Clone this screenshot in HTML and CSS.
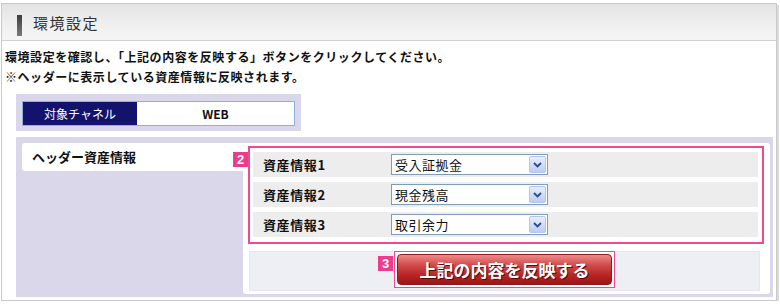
FILE: index.html
```html
<!DOCTYPE html>
<html lang="ja">
<head>
    <meta charset="UTF-8">
    <title>環境設定</title>
    <link rel="stylesheet" href="styles.css">
</head>
<body>
    <div class="frame">
        <div class="title-bar">
            <span class="title-mark"></span>
            <h1>環境設定</h1>
        </div>

        <div class="content">
            <p class="intro">
                環境設定を確認し、「上記の内容を反映する」ボタンをクリックしてください。<br>
                ※ヘッダーに表示している資産情報に反映されます。
            </p>

            <div class="channel-box">
                <div class="channel">
                    <span class="channel-label">対象チャネル</span>
                    <span class="channel-value">WEB</span>
                </div>
            </div>

            <div class="asset-panel">
                <div class="asset-tab">ヘッダー資産情報</div>

                <div class="asset-body">
                    <div class="asset-list">
                        <span class="badge badge-list">2</span>

                        <div class="asset-row">
                            <span class="asset-label">資産情報1</span>
                            <div class="select">
                                <span class="select-text">受入証拠金</span>
                                <span class="select-arrow">
                                    <svg width="9" height="6" viewBox="0 0 9 6"><path d="M1 1 L4.5 4.5 L8 1" fill="none" stroke="#2c4a8c" stroke-width="1.8"/></svg>
                                </span>
                            </div>
                        </div>

                        <div class="asset-row">
                            <span class="asset-label">資産情報2</span>
                            <div class="select">
                                <span class="select-text">現金残高</span>
                                <span class="select-arrow">
                                    <svg width="9" height="6" viewBox="0 0 9 6"><path d="M1 1 L4.5 4.5 L8 1" fill="none" stroke="#2c4a8c" stroke-width="1.8"/></svg>
                                </span>
                            </div>
                        </div>

                        <div class="asset-row">
                            <span class="asset-label">資産情報3</span>
                            <div class="select">
                                <span class="select-text">取引余力</span>
                                <span class="select-arrow">
                                    <svg width="9" height="6" viewBox="0 0 9 6"><path d="M1 1 L4.5 4.5 L8 1" fill="none" stroke="#2c4a8c" stroke-width="1.8"/></svg>
                                </span>
                            </div>
                        </div>
                    </div>

                    <div class="submit-area">
                        <div class="submit-wrap">
                            <span class="badge badge-submit">3</span>
                            <button class="submit-btn">上記の内容を反映する</button>
                        </div>
                    </div>
                </div>
            </div>
        </div>
    </div>
</body>
</html>
```

FILE: styles.css
```css
* {
    margin: 0;
    padding: 0;
    box-sizing: border-box;
}

body {
    background: #fff;
    padding: 3px 0 0 1px;
    font-family: "Noto Sans CJK JP", "Noto Sans", sans-serif;
    color: #111;
}

.frame {
    width: 776px;
    height: 298px;
    border: 1px solid #c9c9c9;
    box-shadow: 2px 2px 0 #dcdcdc;
    background: #fff;
}

/* title */
.title-bar {
    height: 37px;
    border-bottom: 1px solid #cfcfcf;
    background: linear-gradient(#e3e3e3, #eeeeee 50%, #f5f6f4);
    display: flex;
    align-items: center;
    padding-left: 15px;
}

.title-mark {
    width: 5px;
    height: 21px;
    background: linear-gradient(#3c3c3c, #7a7a7a);
    margin-right: 11px;
    margin-top: 6px;
}

.title-bar h1 {
    font-size: 15px;
    font-weight: normal;
    color: #333;
    letter-spacing: 1.5px;
}

/* content */
.content {
    padding: 6px 2px 0 3px;
}

.intro {
    font-size: 12px;
    font-weight: bold;
    line-height: 20px;
    letter-spacing: 0.55px;
}

.channel-box {
    width: 285px;
    height: 37px;
    margin: 7px 0 0 11px;
    padding: 7px 6px 0 6px;
    background: #d9d7e9;
}

.channel {
    display: flex;
    height: 25px;
    border: 1px solid #8fb0da;
    font-size: 12px;
}

.channel-label {
    width: 114px;
    background: #13136e;
    color: #fff;
    display: flex;
    align-items: center;
    justify-content: center;
}

.channel-value {
    flex: 1;
    background: #fff;
    font-weight: bold;
    display: flex;
    align-items: center;
    justify-content: center;
}

/* asset panel */
.asset-panel {
    display: flex;
    align-items: flex-start;
    width: 757px;
    height: 160px;
    margin: 6px 0 0 11px;
    padding: 6px 3px 0 6px;
    background: #d9d7e9;
}

.asset-tab {
    width: 221px;
    height: 28px;
    background: #fff;
    border-radius: 3px 0 0 3px;
    font-size: 13px;
    font-weight: bold;
    padding: 4px 0 0 10px;
}

.asset-body {
    flex: 1;
    height: 151px;
    background: #fff;
    border-radius: 0 3px 3px 3px;
    padding: 3px 6px 0 5px;
}

.asset-list {
    position: relative;
    border: 2px solid #ee4a8e;
    padding: 4px 4px 5px 3px;
    display: flex;
    flex-direction: column;
    gap: 5px;
}

.asset-row {
    display: flex;
    align-items: center;
    height: 25px;
    background: #ededed;
    padding-left: 10px;
}

.asset-label {
    width: 128px;
    font-size: 13px;
    font-weight: bold;
    letter-spacing: 0.6px;
}

.select {
    display: flex;
    width: 157px;
    height: 21px;
    border: 1px solid #7f9db9;
    background: #fff;
}

.select-text {
    flex: 1;
    font-size: 13px;
    line-height: 19px;
    padding-left: 3px;
    letter-spacing: 0.5px;
}

.select-arrow {
    width: 17px;
    margin: 1px;
    border: 1px solid #b4c6ec;
    border-radius: 2px;
    background: linear-gradient(#e8eefc, #bccdf2);
    display: flex;
    align-items: center;
    justify-content: center;
}

.badge {
    position: absolute;
    width: 15px;
    height: 15px;
    background: #ee3b8c;
    color: #fff;
    font-family: "Liberation Sans", sans-serif;
    font-size: 13px;
    font-weight: bold;
    line-height: 15px;
    text-align: center;
}

.badge-list {
    left: -17px;
    top: 4px;
}

/* submit */
.submit-area {
    margin-top: 7px;
    height: 40px;
    background: #eeeef5;
    border: 1px solid #e6e6f1;
    display: flex;
    justify-content: center;
    align-items: flex-start;
    margin-right: 4px;
    margin-left: 1px;
}

.submit-wrap {
    position: relative;
    border: 1px solid #ee4a8e;
    padding: 2px;
    background: #fff;
    margin-top: -1px;
}

.badge-submit {
    left: -17px;
    top: 4px;
}

.submit-btn {
    display: block;
    width: 215px;
    height: 31px;
    border: 1px solid #8e1a1a;
    border-radius: 4px;
    background: linear-gradient(#ee8a8a, #d24a4a 35%, #b82424 70%, #9c1616);
    color: #fff;
    font-family: "Noto Sans CJK JP", sans-serif;
    font-size: 17px;
    font-weight: bold;
    text-shadow: 1px 1px 0 #5a0a0a;
    cursor: pointer;
}
```
